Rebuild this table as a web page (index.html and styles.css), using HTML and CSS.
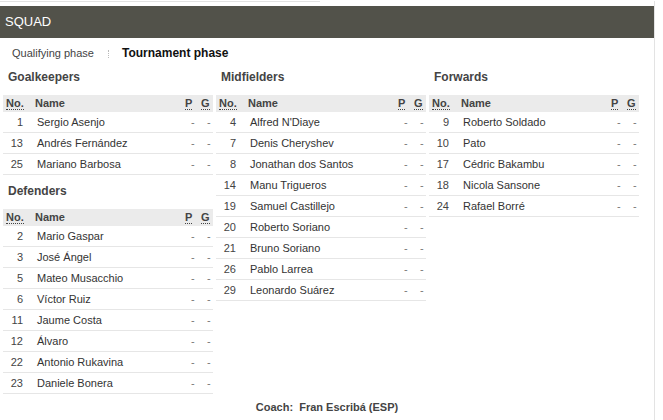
FILE: index.html
```html
<!DOCTYPE html>
<html>
<head>
<meta charset="utf-8">
<link rel="stylesheet" href="styles.css">
</head>
<body>
<div class="page">
  <div class="topline"></div>
  <div class="titlebar">SQUAD</div>
  <div class="tabs">
    <span class="tab">Qualifying phase</span>
    <span class="sep"></span>
    <span class="tab active">Tournament phase</span>
  </div>
  <div class="cols">
    <div class="col">
      <h3 class="pos">Goalkeepers</h3>
      <table class="sq">
        <colgroup><col class="c-no"><col><col class="c-s"><col class="c-s"></colgroup>
        <thead><tr><th class="no"><span class="ab">No.</span></th><th class="nm">Name</th><th class="st"><span class="ab">P</span></th><th class="st"><span class="ab">G</span></th></tr></thead>
        <tbody>
          <tr><td class="no">1</td><td class="nm">Sergio Asenjo</td><td class="st">-</td><td class="st">-</td></tr>
          <tr><td class="no">13</td><td class="nm">Andrés Fernández</td><td class="st">-</td><td class="st">-</td></tr>
          <tr><td class="no">25</td><td class="nm">Mariano Barbosa</td><td class="st">-</td><td class="st">-</td></tr>
        </tbody>
      </table>
      <h3 class="pos next">Defenders</h3>
      <table class="sq">
        <colgroup><col class="c-no"><col><col class="c-s"><col class="c-s"></colgroup>
        <thead><tr><th class="no"><span class="ab">No.</span></th><th class="nm">Name</th><th class="st"><span class="ab">P</span></th><th class="st"><span class="ab">G</span></th></tr></thead>
        <tbody>
          <tr><td class="no">2</td><td class="nm">Mario Gaspar</td><td class="st">-</td><td class="st">-</td></tr>
          <tr><td class="no">3</td><td class="nm">José Ángel</td><td class="st">-</td><td class="st">-</td></tr>
          <tr><td class="no">5</td><td class="nm">Mateo Musacchio</td><td class="st">-</td><td class="st">-</td></tr>
          <tr><td class="no">6</td><td class="nm">Víctor Ruiz</td><td class="st">-</td><td class="st">-</td></tr>
          <tr><td class="no">11</td><td class="nm">Jaume Costa</td><td class="st">-</td><td class="st">-</td></tr>
          <tr><td class="no">12</td><td class="nm">Álvaro</td><td class="st">-</td><td class="st">-</td></tr>
          <tr><td class="no">22</td><td class="nm">Antonio Rukavina</td><td class="st">-</td><td class="st">-</td></tr>
          <tr><td class="no">23</td><td class="nm">Daniele Bonera</td><td class="st">-</td><td class="st">-</td></tr>
        </tbody>
      </table>
    </div>
    <div class="col">
      <h3 class="pos">Midfielders</h3>
      <table class="sq">
        <colgroup><col class="c-no"><col><col class="c-s"><col class="c-s"></colgroup>
        <thead><tr><th class="no"><span class="ab">No.</span></th><th class="nm">Name</th><th class="st"><span class="ab">P</span></th><th class="st"><span class="ab">G</span></th></tr></thead>
        <tbody>
          <tr><td class="no">4</td><td class="nm">Alfred N'Diaye</td><td class="st">-</td><td class="st">-</td></tr>
          <tr><td class="no">7</td><td class="nm">Denis Cheryshev</td><td class="st">-</td><td class="st">-</td></tr>
          <tr><td class="no">8</td><td class="nm">Jonathan dos Santos</td><td class="st">-</td><td class="st">-</td></tr>
          <tr><td class="no">14</td><td class="nm">Manu Trigueros</td><td class="st">-</td><td class="st">-</td></tr>
          <tr><td class="no">19</td><td class="nm">Samuel Castillejo</td><td class="st">-</td><td class="st">-</td></tr>
          <tr><td class="no">20</td><td class="nm">Roberto Soriano</td><td class="st">-</td><td class="st">-</td></tr>
          <tr><td class="no">21</td><td class="nm">Bruno Soriano</td><td class="st">-</td><td class="st">-</td></tr>
          <tr><td class="no">26</td><td class="nm">Pablo Larrea</td><td class="st">-</td><td class="st">-</td></tr>
          <tr><td class="no">29</td><td class="nm">Leonardo Suárez</td><td class="st">-</td><td class="st">-</td></tr>
        </tbody>
      </table>
    </div>
    <div class="col">
      <h3 class="pos">Forwards</h3>
      <table class="sq">
        <colgroup><col class="c-no"><col><col class="c-s"><col class="c-s"></colgroup>
        <thead><tr><th class="no"><span class="ab">No.</span></th><th class="nm">Name</th><th class="st"><span class="ab">P</span></th><th class="st"><span class="ab">G</span></th></tr></thead>
        <tbody>
          <tr><td class="no">9</td><td class="nm">Roberto Soldado</td><td class="st">-</td><td class="st">-</td></tr>
          <tr><td class="no">10</td><td class="nm">Pato</td><td class="st">-</td><td class="st">-</td></tr>
          <tr><td class="no">17</td><td class="nm">Cédric Bakambu</td><td class="st">-</td><td class="st">-</td></tr>
          <tr><td class="no">18</td><td class="nm">Nicola Sansone</td><td class="st">-</td><td class="st">-</td></tr>
          <tr><td class="no">24</td><td class="nm">Rafael Borré</td><td class="st">-</td><td class="st">-</td></tr>
        </tbody>
      </table>
    </div>
  </div>
  <div class="coach">Coach:&nbsp; Fran Escribá (ESP)</div>
</div>
</body>
</html>
```
FILE: styles.css
```css
html, body {
  margin: 0;
  padding: 0;
  background: #fff;
}
body {
  font-family: "Liberation Sans", Arial, sans-serif;
  font-size: 11px;
  color: #333;
}
.page {
  width: 655px;
  height: 420px;
  border-right: 1px solid #e3e3e3;
  box-sizing: border-box;
}
.topline {
  width: 320px;
  height: 1px;
  margin-top: 1px;
  background: #e2e2e2;
}
.titlebar {
  margin-top: 4px;
  height: 32px;
  line-height: 32px;
  background: #52524a;
  color: #fff;
  font-size: 13px;
  padding-left: 5px;
  width: 654px;
  box-sizing: border-box;
}
.tabs {
  margin-top: 8px;
  padding-left: 12px;
  height: 15px;
  line-height: 15px;
  display: flex;
  align-items: center;
}
.tab {
  color: #444;
  font-size: 11px;
}
.tab.active {
  font-size: 12px;
  font-weight: bold;
  color: #111;
}
.sep {
  width: 0;
  height: 8px;
  border-left: 1px dotted #bbb;
  margin: 0 13px 0 14px;
}
.cols {
  display: grid;
  grid-template-columns: repeat(3, 210px);
  column-gap: 3px;
  padding-left: 3px;
  margin-top: 9px;
  align-items: start;
}
.pos {
  margin: 0 0 10px 5px;
  font-size: 12px;
  line-height: 15px;
  font-weight: bold;
  color: #444;
}
.pos.next {
  margin-top: 9px;
}
.sq {
  width: 210px;
  table-layout: fixed;
  border-collapse: collapse;
  font-size: 11px;
}
.c-no { width: 29px; }
.c-s { width: 16px; }
.sq th {
  background: #ebebeb;
  height: 17px;
  padding: 0 0 0 3px;
  text-align: left;
  font-weight: bold;
  color: #444;
  line-height: 13px;
}
.sq th.st {
  padding-left: 4px;
}
.ab {
  border-bottom: 1px dotted #444;
}
.sq td {
  height: 20px;
  padding: 0;
  border-bottom: 1px solid #e6e6e6;
  color: #333;
  white-space: nowrap;
}
.sq td.no {
  text-align: right;
  padding-right: 9px;
  color: #444;
}
.sq td.nm {
  padding-left: 5px;
}
.sq td.st {
  padding-left: 10px;
  color: #777;
}
.coach {
  margin-top: 6px;
  text-align: center;
  font-weight: bold;
  font-size: 11px;
  color: #444;
  line-height: 15px;
}
```
